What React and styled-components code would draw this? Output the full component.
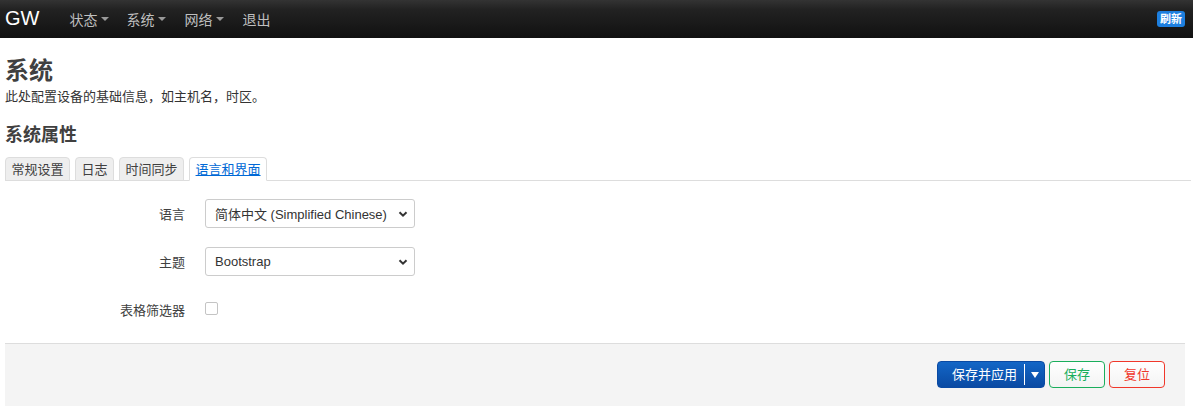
import React from "react";
import styled, { createGlobalStyle } from "styled-components";

const Global = createGlobalStyle`
  html, body { margin: 0; padding: 0; background: #fff; }
  body {
    font-family: "Liberation Sans", "Noto Sans CJK SC", sans-serif;
    font-size: 13px;
    color: #404040;
  }
  * { box-sizing: border-box; }
`;

const Navbar = styled.div`
  height: 38px;
  background: linear-gradient(#333, #222 25%, #111);
  display: flex;
  align-items: center;
  padding: 0 8px 0 5px;
`;

const Brand = styled.a`
  color: #fff;
  font-size: 20px;
  margin-right: 30px;
  line-height: 38px;
  padding-bottom: 2px;
`;

const Menu = styled.div`
  display: flex;
  gap: 17px;
  flex: 1;
`;

const MenuItem = styled.a`
  color: #bfbfbf;
  font-size: 14px;
  display: flex;
  align-items: center;
  gap: 4px;
  margin-right: ${(p) => (p.$extra ? "1px" : "0")};
`;

const Caret = styled.span`
  width: 0;
  height: 0;
  border-left: 4px solid transparent;
  border-right: 4px solid transparent;
  border-top: 4px solid #999;
`;

const Badge = styled.span`
  background: #1d7fdf;
  color: #fff;
  font-size: 11px;
  font-weight: bold;
  padding: 1px 3px;
  border-radius: 3px;
  line-height: 14px;
`;

const Main = styled.div`
  padding: 0 5px;
`;

const Title = styled.h2`
  margin: 15px 0 0;
  font-size: 24px;
  line-height: 36px;
  font-weight: bold;
  color: #404040;
`;

const Desc = styled.div`
  font-size: 13px;
  line-height: 16px;
  color: #333;
`;

const Section = styled.h3`
  margin: 17px 0 0;
  font-size: 18px;
  line-height: 27px;
  font-weight: bold;
  color: #404040;
`;

const Tabs = styled.div`
  display: flex;
  gap: 5px;
  margin: 8px -3px 0 0;
  border-bottom: 1px solid #ddd;
  height: 24px;
`;

const Tab = styled.a`
  display: block;
  height: 24px;
  padding: 0 5.5px;
  font-size: 13px;
  line-height: 23px;
  border: 1px solid #ddd;
  border-bottom: ${(p) => (p.$active ? "1px solid #fff" : "1px solid #ddd")};
  border-radius: 4px 4px 0 0;
  background: ${(p) => (p.$active ? "#fff" : "#eee")};
  color: ${(p) => (p.$active ? "#0069d6" : "#404040")};
  text-decoration: ${(p) => (p.$active ? "underline" : "none")};
`;

const Form = styled.div`
  padding-top: 18px;
  display: flex;
  flex-direction: column;
  gap: 19px;
`;

const Row = styled.div`
  display: flex;
  align-items: center;
  height: 29px;
`;

const Label = styled.label`
  width: 180px;
  text-align: right;
  color: #404040;
  font-size: 13px;
`;

const Field = styled.div`
  margin-left: 20px;
  display: flex;
  align-items: center;
`;

const Select = styled.div`
  width: 210px;
  height: 29px;
  border: 1px solid #ccc;
  border-radius: 3px;
  background: #fff;
  display: flex;
  align-items: center;
  justify-content: space-between;
  padding: 0 6px 0 9px;
  font-size: 13px;
  color: #333;
`;

const Check = styled.span`
  display: block;
  width: 13px;
  height: 13px;
  border: 1px solid #c4c4c4;
  border-radius: 2px;
  background: #fff;
  margin-top: -2px;
`;

const Footer = styled.div`
  margin: 19px 3px 0 0;
  height: 63px;
  background: #f4f4f4;
  border-top: 1px solid #ddd;
  display: flex;
  justify-content: flex-end;
  align-items: flex-start;
  padding: 17px 20px 0 0;
  gap: 4px;
`;

const Split = styled.div`
  display: flex;
  height: 27px;
  border-radius: 4px;
  background: linear-gradient(#1366c6, #0a4aa3);
  border: 1px solid #0a4aa3;
  color: #fff;
  font-size: 13px;
  overflow: hidden;
`;

const SplitMain = styled.span`
  padding: 0 7px 0 14px;
  border-right: 1px solid #fff;
  margin: 2px 0;
  line-height: 21px;
`;

const SplitArrow = styled.span`
  width: 19px;
  display: flex;
  align-items: center;
  justify-content: center;
  &::after {
    content: "";
    border-left: 4px solid transparent;
    border-right: 4px solid transparent;
    border-top: 6px solid #fff;
  }
`;

const Btn = styled.span`
  display: inline-block;
  height: 27px;
  width: 56px;
  text-align: center;
  line-height: 25px;
  border-radius: 4px;
  font-size: 13px;
  border: 1px solid ${(p) => p.$color};
  color: ${(p) => p.$color};
  background: linear-gradient(#fff, #f3f3f3);
`;

const Chevron = () => (
  <svg width="10" height="10" viewBox="0 0 10 10">
    <path d="M1.5 3.2 L5 6.7 L8.5 3.2" fill="none" stroke="#333" strokeWidth="2" />
  </svg>
);

export default function App() {
  return (
    <>
      <Global />
      <Navbar>
        <Brand>GW</Brand>
        <Menu>
          <MenuItem>状态<Caret /></MenuItem>
          <MenuItem $extra>系统<Caret /></MenuItem>
          <MenuItem $extra>网络<Caret /></MenuItem>
          <MenuItem>退出</MenuItem>
        </Menu>
        <Badge>刷新</Badge>
      </Navbar>
      <Main>
        <Title>系统</Title>
        <Desc>此处配置设备的基础信息，如主机名，时区。</Desc>
        <Section>系统属性</Section>
        <Tabs>
          <Tab>常规设置</Tab>
          <Tab>日志</Tab>
          <Tab>时间同步</Tab>
          <Tab $active>语言和界面</Tab>
        </Tabs>
        <Form>
          <Row>
            <Label>语言</Label>
            <Field>
              <Select>简体中文 (Simplified Chinese)<Chevron /></Select>
            </Field>
          </Row>
          <Row>
            <Label>主题</Label>
            <Field>
              <Select>Bootstrap<Chevron /></Select>
            </Field>
          </Row>
          <Row>
            <Label>表格筛选器</Label>
            <Field>
              <Check />
            </Field>
          </Row>
        </Form>
        <Footer>
          <Split>
            <SplitMain>保存并应用</SplitMain>
            <SplitArrow />
          </Split>
          <Btn $color="#1aae5c">保存</Btn>
          <Btn $color="#f0372a">复位</Btn>
        </Footer>
      </Main>
    </>
  );
}
